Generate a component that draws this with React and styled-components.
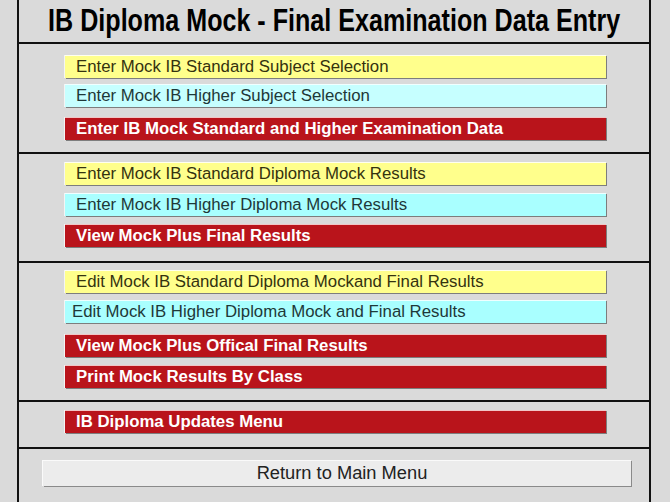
import React from "react";
import styled, { createGlobalStyle } from "styled-components";

const GlobalStyle = createGlobalStyle`
  html, body {
    margin: 0;
    padding: 0;
    background: #dadada;
    font-family: "Liberation Sans", Arial, sans-serif;
  }
`;

const Page = styled.div`
  min-height: 502px;
  padding-left: 17px;
  box-sizing: border-box;
`;

const Frame = styled.div`
  width: 634px;
  min-height: 502px;
  box-sizing: border-box;
  border-left: 2px solid #111;
  border-right: 2px solid #111;
  display: flex;
  flex-direction: column;
`;

const Header = styled.div`
  height: 42px;
  display: flex;
  align-items: center;
  justify-content: center;
  border-bottom: 2px solid #111;
  overflow: hidden;
`;

const Title = styled.h1`
  margin: 0;
  font-size: 31px;
  font-weight: bold;
  color: #000;
  white-space: nowrap;
  transform: scaleX(0.81);
`;

const Section = styled.div`
  display: flex;
  flex-direction: column;
  padding: ${(p) => p.$pad || 0};
  border-bottom: ${(p) => (p.$last ? "none" : "2px solid #111")};
`;

const palette = {
  yellow: { bg: "#ffff8c", fg: "#34320f", weight: "normal", top: "#fffff0" },
  cyan: { bg: "#c6ffff", fg: "#1e3838", weight: "normal", top: "#f0ffff" },
  aqua: { bg: "#a9ffff", fg: "#1e3838", weight: "normal", top: "#f0ffff" },
  red: { bg: "#b9141b", fg: "#ffffff", weight: "bold", top: "#f1c6c6" },
};

const MenuButton = styled.button`
  display: block;
  box-sizing: border-box;
  margin: ${(p) => p.$gap || 0}px 0 0 46px;
  width: 541px;
  height: 23px;
  padding: 0 0 0 ${(p) => p.$indent || 11}px;
  text-align: left;
  font-family: "Liberation Sans", Arial, sans-serif;
  font-size: 16.8px;
  line-height: 1;
  font-weight: ${(p) => palette[p.$tone].weight};
  color: ${(p) => palette[p.$tone].fg};
  background: ${(p) => palette[p.$tone].bg};
  border: none;
  border-top: 1px solid ${(p) => palette[p.$tone].top};
  box-shadow: 1px 1px 0 #7d7d7d, -1px 0 0 #f4f4f4;
  cursor: pointer;
  white-space: nowrap;
`;

const ReturnButton = styled.button`
  box-sizing: border-box;
  margin: 11px 0 0 24px;
  width: 588px;
  height: 26px;
  font-family: "Liberation Sans", Arial, sans-serif;
  font-size: 18.3px;
  line-height: 1;
  color: #222;
  background: #ececec;
  border: none;
  border-top: 1px solid #fafafa;
  box-shadow: 1px 1px 0 #8a8a8a, -1px 0 0 #fafafa;
  cursor: pointer;
  padding: 0 0 0 10px;
`;

export default function App() {
  return (
    <Page>
      <GlobalStyle />
      <Frame>
        <Header>
          <Title>IB Diploma Mock - Final Examination Data Entry</Title>
        </Header>

        <Section $pad="11px 0 12px">
          <MenuButton $tone="yellow">Enter Mock IB Standard Subject Selection</MenuButton>
          <MenuButton $tone="cyan" $gap={6}>Enter Mock IB Higher Subject Selection</MenuButton>
          <MenuButton $tone="red" $gap={10}>Enter IB Mock Standard and Higher Examination Data</MenuButton>
        </Section>

        <Section $pad="8px 0 14px">
          <MenuButton $tone="yellow">Enter Mock IB Standard Diploma Mock Results</MenuButton>
          <MenuButton $tone="aqua" $gap={8}>Enter Mock IB Higher Diploma Mock Results</MenuButton>
          <MenuButton $tone="red" $gap={8}>View Mock Plus Final Results</MenuButton>
        </Section>

        <Section $pad="7px 0 12px">
          <MenuButton $tone="yellow">Edit Mock IB Standard Diploma Mockand Final Results</MenuButton>
          <MenuButton $tone="aqua" $gap={7} $indent={7}>Edit Mock IB Higher Diploma Mock and Final Results</MenuButton>
          <MenuButton $tone="red" $gap={11}>View Mock Plus Offical Final Results</MenuButton>
          <MenuButton $tone="red" $gap={8}>Print Mock Results By Class</MenuButton>
        </Section>

        <Section $pad="8px 0 14px">
          <MenuButton $tone="red">IB Diploma Updates Menu</MenuButton>
        </Section>

        <Section $last>
          <ReturnButton>Return to Main Menu</ReturnButton>
        </Section>
      </Frame>
    </Page>
  );
}
